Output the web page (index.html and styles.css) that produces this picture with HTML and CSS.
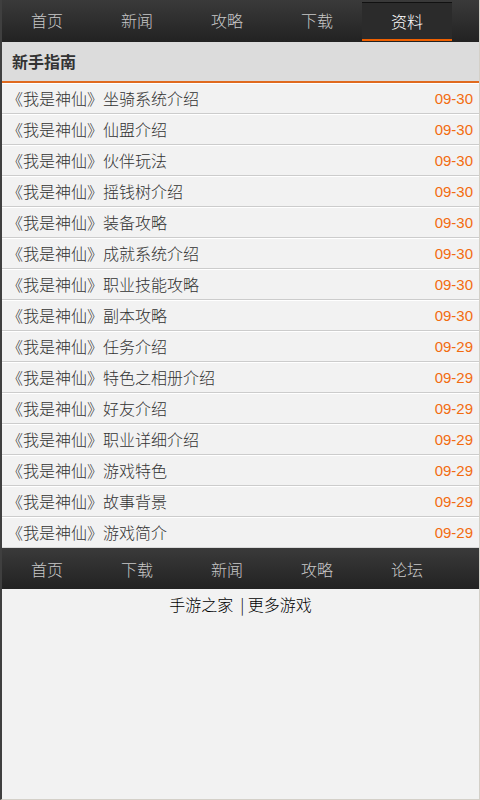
FILE: index.html
```html
<!DOCTYPE html>
<html lang="zh-CN">
<head>
<meta charset="utf-8">
<title>新手指南</title>
<link rel="stylesheet" href="styles.css">
</head>
<body>
<div class="page">
  <nav class="nav nav-top">
    <a class="nav-item">首页</a>
    <a class="nav-item">新闻</a>
    <a class="nav-item">攻略</a>
    <a class="nav-item">下载</a>
    <a class="nav-item active">资料</a>
  </nav>
  <h2 class="section-title">新手指南</h2>
  <ul class="list">
    <li class="row"><span class="title">《我是神仙》坐骑系统介绍</span><span class="date">09-30</span></li>
    <li class="row"><span class="title">《我是神仙》仙盟介绍</span><span class="date">09-30</span></li>
    <li class="row"><span class="title">《我是神仙》伙伴玩法</span><span class="date">09-30</span></li>
    <li class="row"><span class="title">《我是神仙》摇钱树介绍</span><span class="date">09-30</span></li>
    <li class="row"><span class="title">《我是神仙》装备攻略</span><span class="date">09-30</span></li>
    <li class="row"><span class="title">《我是神仙》成就系统介绍</span><span class="date">09-30</span></li>
    <li class="row"><span class="title">《我是神仙》职业技能攻略</span><span class="date">09-30</span></li>
    <li class="row"><span class="title">《我是神仙》副本攻略</span><span class="date">09-30</span></li>
    <li class="row"><span class="title">《我是神仙》任务介绍</span><span class="date">09-29</span></li>
    <li class="row"><span class="title">《我是神仙》特色之相册介绍</span><span class="date">09-29</span></li>
    <li class="row"><span class="title">《我是神仙》好友介绍</span><span class="date">09-29</span></li>
    <li class="row"><span class="title">《我是神仙》职业详细介绍</span><span class="date">09-29</span></li>
    <li class="row"><span class="title">《我是神仙》游戏特色</span><span class="date">09-29</span></li>
    <li class="row"><span class="title">《我是神仙》故事背景</span><span class="date">09-29</span></li>
    <li class="row"><span class="title">《我是神仙》游戏简介</span><span class="date">09-29</span></li>
  </ul>
  <nav class="nav nav-bottom">
    <a class="nav-item">首页</a>
    <a class="nav-item">下载</a>
    <a class="nav-item">新闻</a>
    <a class="nav-item">攻略</a>
    <a class="nav-item">论坛</a>
  </nav>
  <div class="footer"><a>手游之家</a>  | <a>更多游戏</a></div>
</div>
</body>
</html>
```
FILE: styles.css
```css
html, body {
  margin: 0;
  padding: 0;
  background: #f2f2f2;
}
body {
  font-family: "Noto Sans CJK SC", "Liberation Sans", sans-serif;
  font-size: 16px;
  color: #333;
}
.page {
  box-sizing: border-box;
  width: 480px;
  min-height: 800px;
  border-left: 2px solid #3f3f3f;
  border-right: 1px solid #d4d0c8;
  border-bottom: 1px solid #d4d0c8;
  background: #f2f2f2;
}
.nav {
  display: flex;
  background: linear-gradient(#3a3a3a, #222);
}
.nav-top {
  height: 42px;
}
.nav-bottom {
  height: 41px;
}
.nav-item {
  box-sizing: border-box;
  width: 90px;
  display: flex;
  align-items: center;
  justify-content: center;
  color: #c8c8c8;
  font-size: 16px;
  font-weight: 300;
  line-height: 1;
}
.nav-top .nav-item {
  padding-bottom: 2px;
}
.nav-item.active {
  color: #fff;
  background: #2b2b2b;
  margin-top: 2px;
  margin-bottom: 1px;
  border-top: 1px solid #111;
  border-bottom: 2px solid #f06000;
  padding-bottom: 0;
}
.section-title {
  margin: 0;
  height: 41px;
  box-sizing: border-box;
  padding: 0 10px 1px;
  display: flex;
  align-items: center;
  font-size: 16px;
  font-weight: bold;
  color: #333;
  background: #dcdcdc;
  border-bottom: 2px solid #e06a1e;
}
.list {
  list-style: none;
  margin: 0;
  padding: 0;
}
.row {
  box-sizing: border-box;
  height: 31px;
  display: flex;
  align-items: center;
  justify-content: space-between;
  padding: 0 6px 2px 5px;
  border-top: 1px solid #fff;
  border-bottom: 1px solid #cccccc;
  background: #f2f2f2;
}
.row:last-child {
  border-bottom: 1px solid #d9d9d9;
}
.title {
  color: #333;
  font-size: 16px;
  font-weight: 300;
}
.date {
  color: #f26c10;
  font-size: 15px;
  font-family: "Liberation Sans", sans-serif;
  padding-top: 2px;
}
.footer {
  text-align: center;
  padding-top: 3px;
  font-size: 16px;
  font-weight: 300;
  color: #000;
  white-space: pre;
}
```
